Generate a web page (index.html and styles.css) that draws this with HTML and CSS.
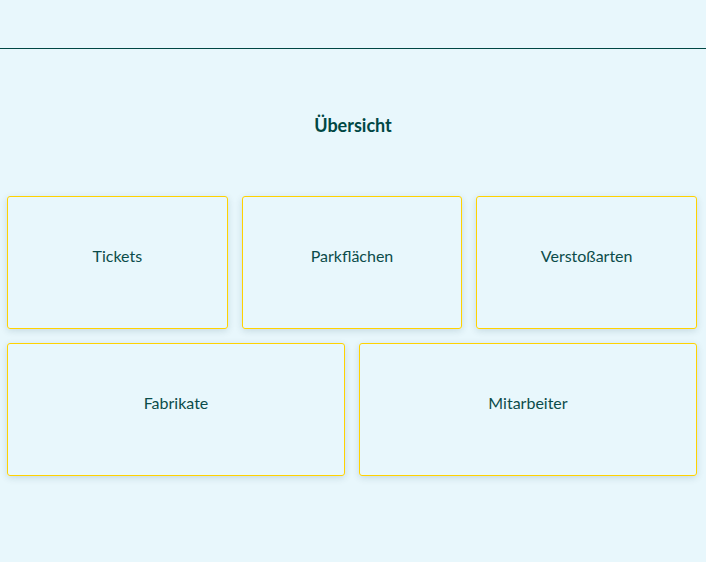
FILE: index.html
```html
<!DOCTYPE html>
<html lang="de">
<head>
    <meta charset="UTF-8">
    <meta name="viewport" content="width=device-width, initial-scale=1.0">
    <title>Übersicht</title>
    <link rel="stylesheet" href="styles.css">
</head>
<body>
    <div class="topbar"></div>
    <div class="main">
        <h1 class="title">Übersicht</h1>
        <div class="tiles three">
            <div class="tile">Tickets</div>
            <div class="tile">Parkflächen</div>
            <div class="tile">Verstoßarten</div>
        </div>
        <div class="tiles two">
            <div class="tile">Fabrikate</div>
            <div class="tile">Mitarbeiter</div>
        </div>
    </div>
</body>
</html>
```

FILE: styles.css
```css
body {
    margin: 0;
    font-family: Lato, "Open Sans", sans-serif;
    background-color: #e8f7fc;
    color: #0b4c4a;
}
.topbar {
    height: 48px;
    border-bottom: 1px solid #004744;
}
.main {
    padding-top: 64px;
}
.title {
    margin: 0 0 59px;
    font-size: 18px;
    line-height: 24px;
    font-weight: bold;
    text-align: center;
    color: #004744;
}
.tiles {
    display: grid;
    gap: 14px;
    padding: 0 9px 0 7px;
    margin-bottom: 14px;
}
.tiles.three {
    grid-template-columns: repeat(3, 1fr);
}
.tiles.two {
    grid-template-columns: repeat(2, 1fr);
}
.tile {
    box-sizing: border-box;
    height: 133px;
    padding-bottom: 14px;
    display: flex;
    justify-content: center;
    align-items: center;
    font-size: 16px;
    border: 1px solid #ffd200;
    border-radius: 3px;
    box-shadow: 0 2px 7px rgba(0, 60, 80, 0.15);
    cursor: pointer;
}
```
